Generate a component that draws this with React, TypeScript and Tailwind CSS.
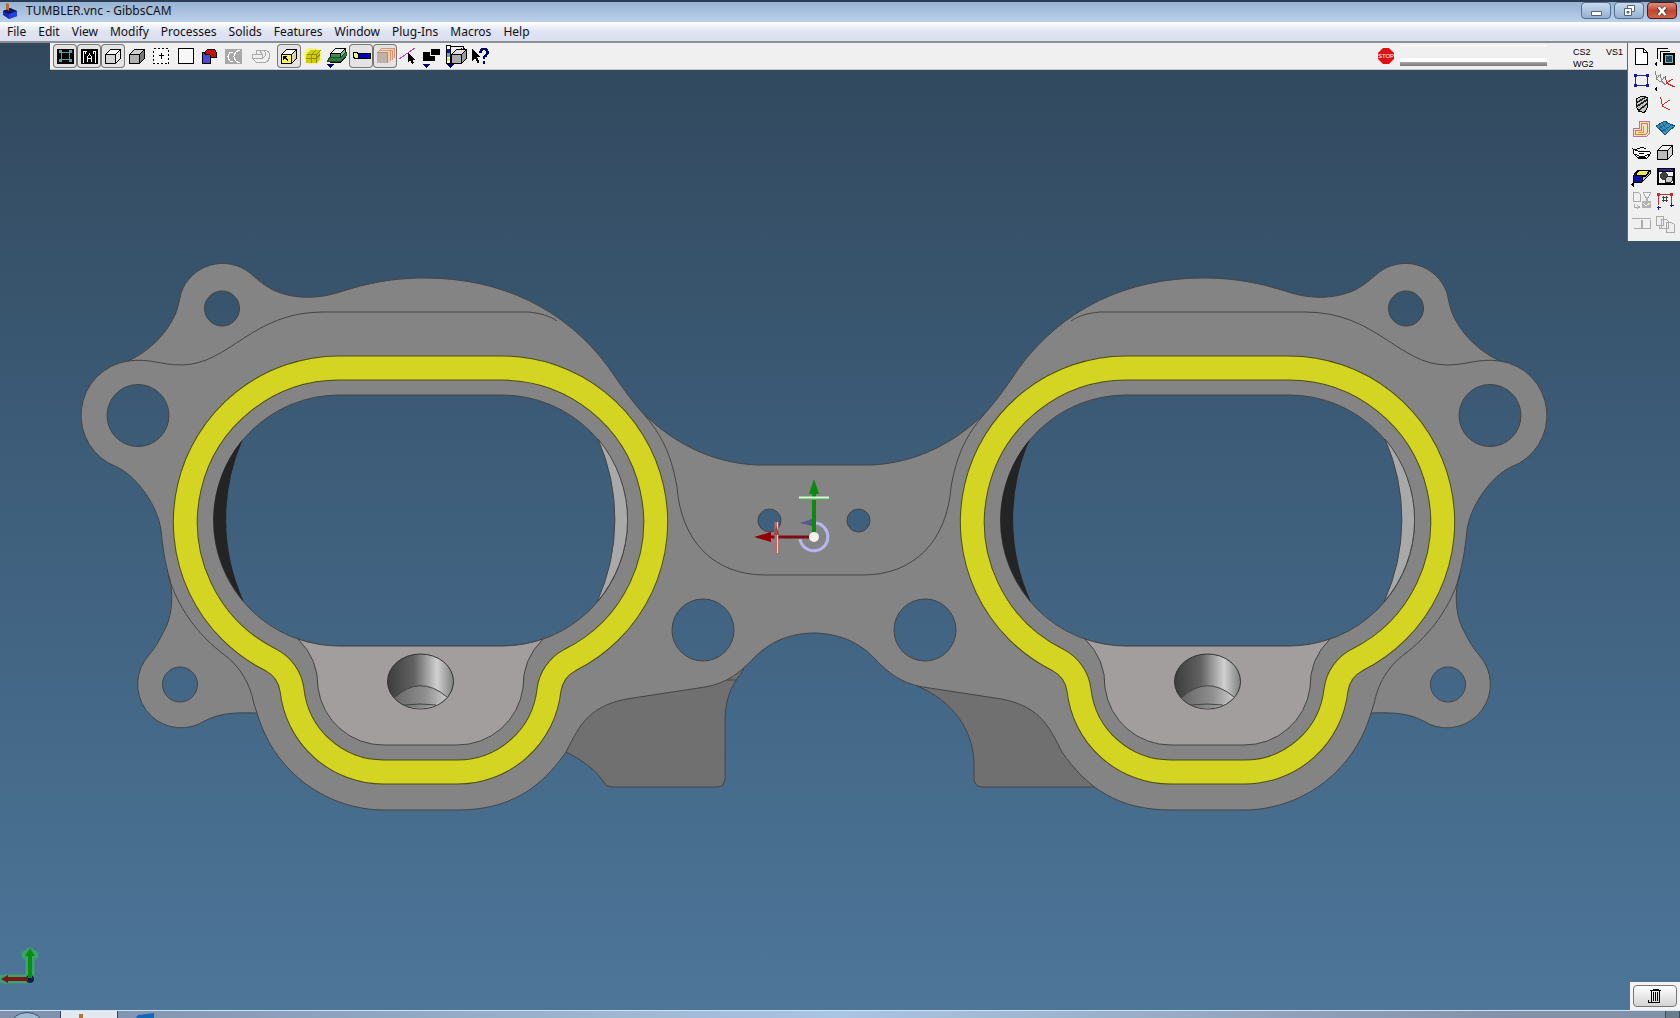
import React from 'react';

const menus = ['File', 'Edit', 'View', 'Modify', 'Processes', 'Solids', 'Features', 'Window', 'Plug-Ins', 'Macros', 'Help'];

interface CubeProps {
  x?: number;
  y?: number;
  front?: string;
  top?: string;
  side?: string;
}

const Cube: React.FC<CubeProps> = ({ x = 4, y = 5, front = '#c8c8c8', top = '#fff', side = '#e6e6e6' }) => (
  <g transform={`translate(${x} ${y})`} stroke="#000" strokeLinejoin="round">
    <path d="M.5 5.500h10v9h-10z" fill={front} />
    <path d="M.5 5.500 5.500.5h10l-5 5z" fill={top} />
    <path d="M10.500 5.500l5-5v9l-5 5z" fill={side} />
  </g>
);

const Corner = () => <path d="M2 20h7l-3.500 4z" fill="#00006e" />;

interface Tool {
  label: string;
  pressed?: boolean;
  gap?: boolean;
  icon: React.ReactNode;
}

const tools: Tool[] = [
  {
    label: 'Workspace',
    pressed: true,
    icon: (
      <>
        <path d="M4 5h17v15H4z" fill="#000" />
        <path d="M8.500 8.500h8v7h-8z" fill="none" stroke="#4fa3b5" />
        <path d="M6 6h3v3H6zM16 6h3v3h-3zM6 15h3v3H6zM16 15h3v3h-3z" fill="#4fa3b5" />
      </>
    ),
  },
  {
    label: 'Labels',
    pressed: true,
    icon: (
      <>
        <path d="M4 5h17v15H4z" fill="#000" />
        <path d="M6.500 19V7.500h3M18.500 19V7.500h-3M8.500 7v3M16.500 7v3M10.500 18v-5l2-3 2 3v5M10.500 14.500h4" fill="none" stroke="#fff" />
      </>
    ),
  },
  { label: 'Wireframe solid', pressed: true, icon: <Cube front="#d4d4d4" /> },
  { label: 'Shaded solid', icon: <Cube front="#b0b0b0" top="#d0d0d0" side="#777" /> },
  {
    label: 'Center view',
    icon: (
      <>
        <path d="M4.500 4.500h15v15h-15z" fill="#fff" stroke="#000" strokeDasharray="2 2" />
        <path d="M12.500 9v6M10 11.500h5" stroke="#000" />
      </>
    ),
  },
  { label: 'Blank view', icon: <path d="M5.500 4.500h15v15h-15z" fill="#f8f8f8" stroke="#000" /> },
  {
    label: 'Cut part',
    icon: (
      <>
        <path d="M5.500 8.500h8v11h-8z" fill="#4a4ad8" stroke="#000" />
        <path d="M8.500 10.500 7.500 8.500 10.500 5.500h7l2 3v5h-5l-2-3z" fill="#c80d0d" stroke="#000" />
      </>
    ),
  },
  {
    label: 'Profile',
    icon: (
      <>
        <path d="M4 5h17v15H4z" fill="#a8a8a8" />
        <path d="M12 8.500H9q-4 4 0 8.500h3M19 6.500h-2q-8 6 0 12h2" fill="none" stroke="#fff" />
      </>
    ),
  },
  {
    label: 'Intersect',
    gap: true,
    icon: (
      <path
        d="M7.500 10.500v-4h9q5 1 4 6.500-1 5-5 5.500h-8l-4-4v-4h10v4h-10M13.500 10.500l-3-4M15 6.500q4 4-1.500 8"
        fill="none"
        stroke="#aaa"
      />
    ),
  },
  {
    label: 'Select face',
    pressed: true,
    gap: true,
    icon: (
      <>
        <Cube front="#fff34a" top="#fff" side="#d7d7a0" />
        <path d="M6 12h5l-2 1.500 2 2.500-1 1-2.500-2.500L6 16z" fill="#000" />
      </>
    ),
  },
  {
    label: 'Highlight solid',
    icon: (
      <>
        <rect x="3" y="4" width="18" height="16" rx="6" fill="#f6f640" opacity=".6" />
        <path d="M5 10l4-4h10v9l-4 4H5z" fill="#d2ce00" />
        <path d="M5.500 10.500h10v8M15.500 10.500l4-4M10.500 10.500v8M5 14.500h10l4-4M10.500 10.500l4-4" fill="none" stroke="#8f8a10" />
      </>
    ),
  },
  {
    label: 'Section',
    icon: (
      <>
        <Cube x={5} y={4} front="#3a8a4c" top="#e8f5ec" side="#7ab888" />
        <path d="M2.500 17.500l2-4h11l5-5h1v3l-6 6z" fill="#2d7d3f" stroke="#1c4f28" />
        <Corner />
      </>
    ),
  },
  {
    label: 'Tool view',
    pressed: true,
    icon: (
      <>
        <path d="M9.500 9.500h12v5h-12z" fill="#0000b8" stroke="#000" />
        <path d="M4.500 8.500h4l1 2v3l-1 1h-3l-1-2z" fill="#f5ef88" stroke="#000" />
      </>
    ),
  },
  {
    label: 'Facets',
    pressed: true,
    icon: (
      <>
        <path d="M12.500 8.500l4-4h5v9l-6 5z" fill="#f3cfb6" />
        <path d="M4.500 8.500l4-4h13v9M6.500 6.500h13v9M17.500 7v10" fill="none" stroke="#d9966c" />
        <path d="M4 9h10v10H4z" fill="#bdb2ac" />
        <path d="M14.500 9v10M4 8.500h11" stroke="#c98660" />
      </>
    ),
  },
  {
    label: 'Pick edge',
    icon: (
      <>
        <path d="M2 15 18 4" stroke="#c63fc0" />
        <path d="M11 9v9l2-2 2 4 2-1-2-3.500h3z" fill="#000" />
      </>
    ),
  },
  {
    label: 'Hide bodies',
    icon: (
      <>
        <path d="M2 8h12v9H2zM10 5h9v6h-9z" fill="#000" />
        <path d="M9.500 8v3.500H14" fill="none" stroke="#eee" />
        <Corner />
      </>
    ),
  },
  {
    label: 'Body bag',
    icon: (
      <>
        <path d="M1.500 1.500h4v18h-4z" fill="#fff" stroke="#000" />
        <path d="M2 5h3v4H2z" fill="#0d17a8" />
        <path d="M2 9h3v4H2z" fill="#4eb1b9" />
        <path d="M2 14h3v3H2z" fill="#eeee50" />
        <path d="M6 2.500h12V6M16 4.500l2 2 2-2" fill="none" stroke="#000" />
        <Cube x={6} y={5} front="#aaa" top="#ddd" side="#999" />
        <Corner />
      </>
    ),
  },
  {
    label: 'Balloon help',
    icon: (
      <>
        <path d="M3 5v12l3-3 2.500 5 2-1L8 13h4z" fill="#000" />
        <path d="M11.500 9q0-4 3.500-4t3.500 3.500q0 2-3.500 4.500v2M15 17v2.500" fill="none" stroke="#00006e" strokeWidth="2.500" />
      </>
    ),
  },
];

const palette: Tool[] = [
  { label: 'Documents', icon: <path d="M6.500 4.500h8l4 4v12h-12zM14.500 4.500v4h4" fill="#fff" stroke="#000" /> },
  {
    label: 'Workgroups',
    icon: (
      <>
        <path d="M15 4.500H4.500V15M17 7.500H7.500V18M10.500 21V9.500H18" fill="none" stroke="#000" strokeWidth="1.500" />
        <path d="M10 9h12v12H10z" fill="#000" />
        <path d="M12.500 11.500h7v7h-7z" fill="#24495a" stroke="#73b7c0" />
        <path d="M4 17v6l-3-3z" fill="#000" />
      </>
    ),
  },
  {
    label: 'Geometry',
    icon: (
      <>
        <path d="M6.500 7.500h12v10h-12z" fill="none" stroke="#222a90" />
        <path d="M5 6h3v3H5zM17 6h3v3h-3zM5 16h3v3H5zM17 16h3v3h-3z" fill="#1717a5" />
      </>
    ),
  },
  {
    label: 'Coordinate systems',
    icon: (
      <>
        <path d="M2.500 3l1 8 4 3M3.500 11l3-4M7.500 6l1 7 4 4M8.500 13l3-4" fill="none" stroke="#888" />
        <path d="M12.500 8l1 7 8 4M13.500 15l6-4" fill="none" stroke="#c92c2c" />
        <path d="M4 18v6l-3-3z" fill="#000" />
      </>
    ),
  },
  {
    label: 'Tools',
    icon: (
      <>
        <path d="M7.500 6.500l5-2 6 1v10l-3 5-5-1-3-4z" fill="#c4c4c4" stroke="#000" />
        <path d="M7 11l10-6M7 15l12-8M9 19l10-8" stroke="#222" strokeWidth="1.500" />
      </>
    ),
  },
  { label: 'CS', icon: <path d="M7.500 5l2 9 7 4M9.500 13l7-5" fill="none" stroke="#c92c2c" /> },
  {
    label: 'Machining',
    icon: (
      <>
        <path d="M4.500 12.500h6v-7h10v12l-3 3h-13z" fill="#f8dfc0" stroke="#a878a8" />
        <path d="M6.500 14.500h6v-7h6v9l-2 2h-10z" fill="none" stroke="#e8742c" />
        <path d="M8.500 16.500h6v-7" fill="none" stroke="#e8943c" />
      </>
    ),
  },
  {
    label: 'Surfaces',
    icon: (
      <>
        <path d="M3 10 12 5q4 3 10 5-6 4-10 9-4-5-9-9z" fill="#3c93c0" stroke="#145375" />
        <path d="M6 12q5-2 9-5M9 15q5-2 9-6M9 7q3 4 6 7M6 9q3 3 7 7" fill="none" stroke="#145375" strokeWidth=".7" />
      </>
    ),
  },
  {
    label: 'Part rendering',
    icon: (
      <>
        <path d="M5 14l-1-5 5 2h11l2 2-4 5H9z" fill="#fff" stroke="#000" />
        <path d="M6 10q6-4 11-1M6 14q7 5 14 0M9 17q4 2 8 0M10 13h5" fill="none" stroke="#000" />
      </>
    ),
  },
  { label: 'Solids', icon: <Cube x={4} y={5} front="#bcbcbc" top="#f2f2f2" side="#d4d4d4" /> },
  {
    label: 'Operations',
    icon: (
      <>
        <path d="M4 12 9 6h12l-5 8-3 4H4z" fill="#10109c" stroke="#000" />
        <path d="M10 6h11l-4 5H7z" fill="#f0ea4d" stroke="#000" />
        <path d="M13 12h4l4-5v3l-8 8z" fill="#b9c4de" stroke="#000" />
        <path d="M5 18v5l-3-2.500z" fill="#000" />
      </>
    ),
  },
  {
    label: 'Render',
    icon: (
      <>
        <path d="M4 4h18v17H4z" fill="#000" />
        <path d="M6 8h14v11H6z" fill="#f2f2f2" />
        <path d="M6 5h14v2H6z" fill="#2a2a90" />
        <circle cx="11" cy="12" r="4" fill="#404040" />
        <path d="M12.500 14.500l2-2h5v4l-2 2h-5z" fill="#ccc" stroke="#222" />
      </>
    ),
  },
  {
    label: 'Post process',
    icon: (
      <>
        <path d="M4.500 4.500h5l2 2v7h-7zM14.500 4.500h7l-2 5h-3zM5.500 16v3h5M8 17l2.500 2L8 21" fill="none" stroke="#aaa" />
        <path d="M13 13h9v7h-9zM17 9h2v5h-2z" fill="#b2b2b2" />
        <path d="M14 15l3 3 4-3" fill="none" stroke="#eee" />
      </>
    ),
  },
  {
    label: 'Dimensions',
    icon: (
      <>
        <path d="M5.500 17V6.500h13V15" fill="none" stroke="#c92c2c" />
        <path d="M4 5h3v3H4zM17 5h3v3h-3z" fill="#c92c2c" />
        <path d="M10.500 8v6M13.500 8v6M9 9.500h6M9 12.500h6" stroke="#444" />
        <path d="M5.500 18v4M3.500 19.500h4M18.500 15v4M16.500 17h4" stroke="#1717a5" />
      </>
    ),
  },
  { label: 'Split', icon: <path d="M3 6.500h19M4.500 16.500h8v-9M13.500 7.500v9h8v-9" fill="none" stroke="#aaa" /> },
  {
    label: 'Copies',
    icon: (
      <path
        d="M3.500 4.500h7v9h-7zM8.500 7.500h5l2 2v7h-7zM13.500 10.500h5l3 2v8h-8zM6.500 13.500v3h2"
        fill="#eee"
        stroke="#aaa"
      />
    ),
  },
];

const ToolButton: React.FC<{ tool: Tool }> = ({ tool }) => (
  <button
    type="button"
    aria-label={tool.label}
    aria-pressed={tool.pressed}
    className={`w-6 h-6 flex-shrink-0 rounded-sm ${tool.gap ? 'ml-1' : ''} ${
      tool.pressed ? 'bg-[#e4e4e4] ring-1 ring-inset ring-[#777]' : ''
    }`}
  >
    <svg className="w-6 h-6" viewBox="0 0 24 24" shapeRendering="crispEdges">
      {tool.icon}
    </svg>
  </button>
);

const TitleBar = () => (
  <header className="h-[22px] flex items-start border-t-2 border-[#2b3d54] bg-linear-to-b from-[#98b3d3] to-[#bbd1ea]">
    <svg className="w-4 h-4 ml-[2px] mt-px flex-shrink-0" viewBox="0 0 16 16">
      <path d="M1 8l7-3 7 3v5l-8 3-6-4z" fill="#1827b8" />
      <path d="M1 8l6 3 8-3-7-3z" fill="#111850" />
      <path d="M7 11v5l8-3V8z" fill="#2840e8" />
      <path d="M4 0l3 1v7L4 6z" fill="#b86b28" />
    </svg>
    <h1 className="flex-1 ml-2 text-xs leading-[18px] text-[#111]">TUMBLER.vnc - GibbsCAM</h1>
    <div className="flex gap-[3px] pr-[3px]">
      <button type="button" aria-label="Minimize" className="w-[30px] h-[17px] rounded-sm border border-[#55708f] bg-linear-to-b from-[#c8daee] to-[#94b1d2]">
        <svg className="w-7 h-[15px]" viewBox="0 0 28 15">
          <path d="M9.500 8.500h10v4h-10z" fill="#fff" stroke="#54657a" />
        </svg>
      </button>
      <button type="button" aria-label="Restore" className="w-[30px] h-[17px] rounded-sm border border-[#55708f] bg-linear-to-b from-[#c8daee] to-[#94b1d2]">
        <svg className="w-7 h-[15px]" viewBox="0 0 28 15">
          <path d="M12.500 2.500h7v6h-7z" fill="#fff" stroke="#54657a" />
          <path d="M9.500 5.500h7v7h-7z" fill="#fff" stroke="#54657a" />
          <path d="M12 8.500h2v1.500h-2z" fill="#a8bfd8" stroke="#54657a" />
        </svg>
      </button>
      <button type="button" aria-label="Close" className="w-[30px] h-[17px] rounded-sm border border-[#4c1715] bg-linear-to-b from-[#dc8e7c] via-[#c14430] to-[#cf6348]">
        <svg className="w-7 h-[15px]" viewBox="0 0 28 15">
          <path d="M10 4l8 8M18 4l-8 8" stroke="#5b3a3a" strokeWidth="4" />
          <path d="M10.500 4l7 8M17.500 4l-7 8" stroke="#fff" strokeWidth="2.500" />
        </svg>
      </button>
    </div>
  </header>
);

const MenuBar = () => (
  <nav className="h-[21px] flex items-start gap-3 pl-[7px] border-b-2 border-[#8b8f98] bg-linear-to-b from-white via-[#dfe4f2] to-[#dcdff0]">
    {menus.map(name => (
      <button type="button" key={name} className="text-xs leading-5 text-[#111]">
        {name}
      </button>
    ))}
  </nav>
);

const BODY =
  'M815 465H757C712 463 672 443 640 410C625 392 620 384 609 368C565 308 500 278 425 278C385 278 360 286 343 291C320 299 295 300 273 290C262 284 257 279 250 273A44 44 0 0 0 181 293C179 302 178 308 175 315C166 335 148 352 128 361A55 55 0 0 0 117 467C138 477 158 507 161 530C163 550 165 562 170 580C174 600 171 620 163 633C159 641 155 648 149 655A43.500 43.500 0 0 0 199 724C215 715 225 712 257 713C275 775 330 810 384 810H457C510 810 541 788 566 752C580 724 590 704 633 698L705 687C728 683 740 672 752 660C768 642 790 633 815 633';

const HOLES =
  'M339 395H502A125.500 125.500 0 0 1 502 646H339A125.500 125.500 0 0 1 339 395ZM204.500 308.500a17.500 17.500 0 1 0 35 0a17.500 17.500 0 1 0-35 0ZM107 415.500a31 31 0 1 0 62 0a31 31 0 1 0-62 0ZM162.500 684.500a17.500 17.500 0 1 0 35 0a17.500 17.500 0 1 0-35 0ZM672 630a31 31 0 1 0 62 0a31 31 0 1 0-62 0ZM758 520.500a11.500 11.500 0 1 0 23 0a11.500 11.500 0 1 0-23 0Z';

const SEAL =
  'M339 368H502A154 154 0 0 1 570 660A40 40 0 0 0 549 690A92 92 0 0 1 457 772H384A92 92 0 0 1 292 690A40 40 0 0 0 271 660A154 154 0 0 1 339 368Z';

// Plate, bolt holes and rim lines for one side; the other side is its mirror
const PlateHalf = () => (
  <>
    <path d={`${BODY}Z${HOLES}`} fill="#848484" fillRule="evenodd" />
    <g fill="none" stroke="#444">
      <path d={BODY} />
      <path d={HOLES} />
      <path d="M128 361C150 358 160 365 182 365C230 364 252 312 323 312H528C540 313 550 316 557 321" />
      <path d="M168 575C180 615 205 640 222 653C241 667 250 684 254 704L257 713" />
      <path d="M640 410C665 437 672 460 677 487C681 540 713 575 765 575H815" />
    </g>
  </>
);

// Port opening with its walls, injector pocket and the yellow seal face
const Port = () => (
  <>
    <path d="M243 439A125.500 125.500 0 0 0 244 602A200 200 0 0 1 243 439Z" fill="#242424" />
    <path d="M598 439A125.500 125.500 0 0 1 597 602A200 200 0 0 0 598 439Z" fill="#a9a9a9" stroke="#444" />
    <path
      d="M298 639A67 67 0 0 1 318 688A66 66 0 0 0 384 745H457A66 66 0 0 0 523 688A67 67 0 0 1 543 639A125.500 125.500 0 0 1 502 646H339A125.500 125.500 0 0 1 298 639Z"
      fill="#a29e9d"
      stroke="#444"
    />
    <ellipse cx="420.500" cy="681.500" rx="33" ry="27.500" fill="url(#bore)" stroke="#333" />
    <path d="M394 698Q420 674 447 697Q420 720 394 698Z" fill="url(#chamfer)" />
    <path d="M394 698Q420 674 447 697M404 705Q420 703 436 705" fill="none" stroke="#444" />
    <path d={SEAL} fill="none" stroke="#4d4d14" strokeWidth="25" />
    <path d={SEAL} fill="none" stroke="#d4d422" strokeWidth="23" />
  </>
);

const PartDrawing = () => (
  <svg className="absolute inset-0 w-full h-full" viewBox="0 43 1680 967" role="img" aria-label="Part model">
    <defs>
      <linearGradient id="bore">
        <stop offset="0" stopColor="#3c3c3c" />
        <stop offset=".4" stopColor="#626262" />
        <stop offset=".75" stopColor="#d0d0d0" />
        <stop offset="1" stopColor="#808080" />
      </linearGradient>
      <linearGradient id="chamfer">
        <stop offset="0" stopColor="#666" />
        <stop offset=".6" stopColor="#909090" />
        <stop offset="1" stopColor="#ccc" />
      </linearGradient>
    </defs>
    <g fill="#707070" stroke="#444">
      <path d="M566 752C580 759 594 768 603 781Q606 787 611 787H717Q725 787 725 778V722C725 703 729 692 736 680L744 669L700 680L580 690Z" />
      <path d="M917 686C952 700 974 730 974 765V778Q974 787 983 787H1100L1060 720L990 690Z" />
    </g>
    <PlateHalf />
    <g transform="translate(1628 0) scale(-1 1)">
      <PlateHalf />
    </g>
    <path d="M727 680h10" stroke="#444" />
    <Port />
    <g transform="translate(787 0)">
      <Port />
    </g>
    <g>
      <path d="M816 523A14 14 0 1 1 800 539" fill="none" stroke="#b9b5f2" strokeWidth="3" />
      <path d="M800 523l12-4v7z" fill="#54588c" />
      <path d="M812 493h4v42h-4z" fill="#0a8a12" />
      <path d="M814 479l5 15h-10z" fill="#078a0d" />
      <path d="M799 499h30" stroke="#5fa35f" strokeWidth="2" />
      <path d="M799 497.500h30" stroke="#d5f8d5" strokeWidth="2" />
      <path d="M770 537h40" stroke="#7d0c10" strokeWidth="3" />
      <path d="M754 537l17-5v10z" fill="#930000" />
      <path d="M776.500 522v31" stroke="#bd6a6a" strokeWidth="4" />
      <path d="M777.500 522v31" stroke="#f6c8c8" />
      <path d="M776.500 526l3 9h-6z" fill="#8f4c50" />
      <circle cx="814" cy="537" r="5" fill="#f2f2ea" />
    </g>
  </svg>
);

const App: React.FC = () => {
  return (
    <div className="h-screen flex flex-col overflow-hidden font-['Noto_Sans',sans-serif]">
      <TitleBar />
      <MenuBar />

      <main className="relative flex-1 min-h-0 flex flex-col justify-between bg-linear-to-b from-[#31485d] via-[#3f607d] to-[#4d7699]">
        <PartDrawing />

        <div className="relative flex items-start">
          <div className="ml-[50px] flex-1 h-[27px] flex items-start pl-[3px] pt-px bg-[#f0f0f0] border-b border-[#c8c8c8]">
            {tools.map(tool => (
              <ToolButton key={tool.label} tool={tool} />
            ))}
            <button type="button" aria-label="Stop" className="ml-auto w-4 h-4 mt-1">
              <svg className="w-4 h-4" viewBox="0 0 16 16">
                <path d="M5 0h6l5 5v6l-5 5H5l-5-5V5z" fill="#dc1212" />
                <text x="8" y="10" textAnchor="middle" fill="#fff" fontSize="6" fontFamily="Liberation Sans, sans-serif">STOP</text>
              </svg>
            </button>
            <div className="ml-[6px] mt-px w-[147px] border-t border-white">
              <div className="h-3" />
              <div className="h-1 bg-white" />
              <div className="h-1 bg-linear-to-b from-[#a8a8a8] to-[#777]" />
            </div>
            <div className="ml-[26px] mt-[2px] w-[54px] grid grid-cols-[33px_auto] font-['Liberation_Sans',sans-serif] text-[9px] leading-3 text-black">
              <span>CS2</span>
              <span>VS1</span>
              <span>WG2</span>
            </div>
          </div>
          <aside className="w-[53px] h-[198px] flex flex-wrap content-start pl-px pt-px border-l border-[#666] bg-[#f0f0f0]">
            {palette.map(tool => (
              <ToolButton key={tool.label} tool={tool} />
            ))}
          </aside>
        </div>

        <div className="relative flex justify-between items-end">
          <svg className="w-12 h-[72px]" viewBox="0 0 48 72">
            <g stroke="#2fd045" strokeWidth="9" strokeLinecap="round" opacity=".5">
              <path d="M30 41V14M30 41H3M26 17h8" />
            </g>
            <circle cx="30" cy="41" r="4" fill="#151a4d" />
            <path d="M28 40V18h-3l5-8 5 8h-3v22z" fill="#07900f" />
            <path d="M28 39H8v-2l-7 4 7 4v-2h20z" fill="#7b1414" />
          </svg>
          <div className="w-[50px] h-7 bg-[#f4f4f4] p-[3px]">
            <button type="button" aria-label="Trash" className="w-11 h-[22px] rounded-sm border border-[#777] bg-linear-to-b from-white to-[#d4d4d4] flex items-center justify-center">
              <svg className="w-4 h-4" viewBox="0 0 16 16" shapeRendering="crispEdges">
                <path d="M3 2.500h11M6 1.500h6M4.500 3v11.500h8V3M6.500 4v9M8.500 4v9M10.500 4v9M4 14.500H2L1 12" fill="none" stroke="#000" />
              </svg>
            </button>
          </div>
        </div>
      </main>

      <footer className="h-2 flex items-stretch overflow-hidden border-t border-[#d3e2f0] bg-linear-to-r from-[#7f93ae] from-5% via-[#a9c5e4] via-50% to-[#8291a8] to-90%">
        <svg className="w-[60px] h-2" viewBox="0 0 60 8">
          <ellipse cx="27" cy="14" rx="16" ry="12.500" fill="#9fb9d2" stroke="#34506e" />
        </svg>
        <button type="button" aria-label="GibbsCAM" className="w-[58px] border-x border-[#34465c] bg-[#e3e9f0]">
          <svg className="w-14 h-2" viewBox="0 0 56 8">
            <path d="M18 3h4v5h-4z" fill="#b8702e" />
          </svg>
        </button>
        <button type="button" aria-label="Presentation" className="w-[58px]">
          <svg className="w-[58px] h-2" viewBox="0 0 58 8">
            <path d="M17 8l3-4 16-2v6z" fill="#1568b8" />
          </svg>
        </button>
        <div className="ml-auto w-[15px] border-x border-[#3d4a58] bg-[#6c7c8c]" />
      </footer>
    </div>
  );
};

export default App;
